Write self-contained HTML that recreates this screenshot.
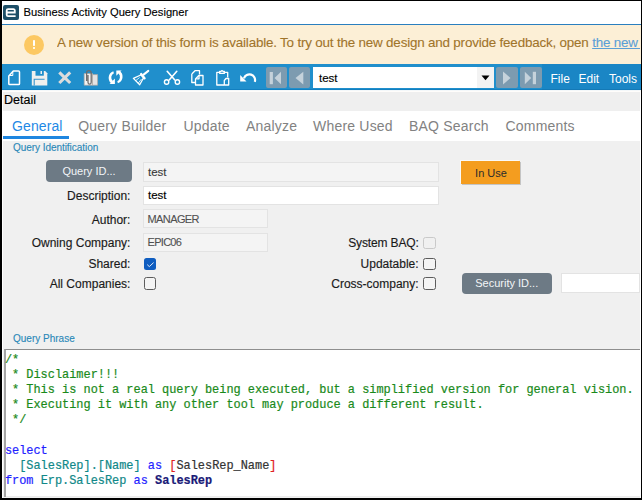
<!DOCTYPE html>
<html><head><meta charset="utf-8">
<style>
*{margin:0;padding:0;box-sizing:border-box}
html,body{width:642px;height:500px;overflow:hidden;background:#000}
body{position:relative;font-family:"Liberation Sans",sans-serif}
.a{position:absolute}
.t{position:absolute;white-space:nowrap;line-height:1}
#win{position:absolute;left:2px;top:1px;width:639px;height:497px;background:#f0f0f0;overflow:hidden}
</style></head><body>
<div id="win"></div>
<!-- title bar -->
<div class="a" style="left:2px;top:1px;width:639px;height:23px;background:#fff"></div>
<div class="a" style="left:3px;top:5px;width:16px;height:15px;background:#1d4f68;border-radius:2px"></div>
<svg class="a" style="left:3px;top:5px" width="16" height="15" viewBox="0 0 16 15">
<path d="M3.7 7.5 H11.8 V5.6 Q11.8 4.2 10.4 4.2 H5.1 Q3.7 4.2 3.7 5.6 V9.7 Q3.7 11.1 5.1 11.1 H12.6" fill="none" stroke="#fff" stroke-width="1.8"/>
</svg>
<div class="t" style="left:23.5px;top:7.1px;font-size:11.2px;color:#000;-webkit-text-stroke:0.12px">Business Activity Query Designer</div>
<div class="a" style="left:2px;top:24px;width:639px;height:1px;background:#2a7fbf"></div>
<!-- notification -->
<div class="a" style="left:2px;top:25px;width:639px;height:39px;background:#fcefd6"></div>
<div class="a" style="left:24px;top:34.5px;width:20px;height:20px;border-radius:50%;background:#fcc862"></div>
<div class="a" style="left:33.2px;top:39.6px;width:1.6px;height:6.2px;background:#fff;border-radius:0.8px"></div>
<div class="a" style="left:33.2px;top:47.4px;width:1.6px;height:1.8px;background:#fff;border-radius:0.8px"></div>
<div class="t" style="left:57px;width:583px;overflow:hidden;top:36.3px;font-size:13.4px;letter-spacing:-0.18px;color:#a0742a;-webkit-text-stroke:0.1px">A new version of this form is available. To try out the new design and provide feedback, open <span style="color:#5b9fd6;text-decoration:underline">the new design</span></div>
<!-- toolbar -->
<div class="a" style="left:2px;top:64px;width:639px;height:25px;background:#208fcc"></div>
<div class="a" style="left:2px;top:89px;width:639px;height:1px;background:#127fc0"></div>
<div class="a" style="left:542px;top:64px;width:99px;height:25px;background:#1a86c5"></div>
<div class="a" style="left:542px;top:88.5px;width:99px;height:1.5px;background:#1479b6"></div>
<div class="a" style="left:2px;top:90px;width:639px;height:1px;background:#f4f8fa"></div>
<div class="a" style="left:2px;top:91px;width:639px;height:1px;background:#fffdfb"></div>
<svg class="a" style="left:0;top:64px" width="262" height="25" viewBox="0 64 262 25">
<g fill="none" stroke="#fff" stroke-linejoin="round" stroke-linecap="round">
<!-- new -->
<path d="M8.8 76 L13.3 71 H18.5 Q19.5 71 19.5 72 V83.7 Q19.5 84.6 18.6 84.6 H9.7 Q8.8 84.6 8.8 83.7 Z" stroke-width="1.5"/>
<path d="M9.5 75.5 L12.8 75.5 L12.8 71.8" stroke-width="1"/>
</g>
<!-- save -->
<path d="M31.8 71 H45.2 L47.3 73.2 V85.4 H31.8 Z" fill="#f0f0ee"/>
<rect x="35.5" y="71" width="8.3" height="4.7" fill="#208fcc"/>
<rect x="40.5" y="71" width="1.5" height="3" fill="#f0f0ee"/>
<path d="M34.2 85.4 V79.2 H44.6" fill="none" stroke="#3592cc" stroke-width="1.1"/>
<!-- X -->
<path d="M59.3 72.3 L70.2 83 M70.2 72.3 L59.3 83" stroke="#dcdcdc" stroke-width="3.1" stroke-linecap="butt"/>
<!-- attach -->
<path d="M84.2 73.6 H92.5 V85.2 H84.2 Z" fill="#f2f2f2" stroke="#b0a8a0" stroke-width="0.7"/>
<path d="M92.5 74.6 H97.6 V85.2 H92.5 Z" fill="#e4e4e4" stroke="#b0a8a0" stroke-width="0.7"/>
<path d="M86.6 81 V73 Q86.6 70.6 88.9 70.6 Q91.2 70.6 91.2 73 V82.3 Q91.2 84.2 89.6 84.2 Q88 84.2 88 82.3 V75" fill="none" stroke="#6e6e6e" stroke-width="1.3"/>
<!-- refresh -->
<g fill="#fff">
<path d="M113.3 71.2 A6.9 6.9 0 0 0 112.3 83.8 L112.8 80.8 A4.6 4.6 0 0 1 113.9 73.2 Z"/>
<path d="M109.6 84 L114.9 84 L114.9 78.6 Z"/>
<g transform="rotate(180 115.6 77.2)">
<path d="M113.3 71.2 A6.9 6.9 0 0 0 112.3 83.8 L112.8 80.8 A4.6 4.6 0 0 1 113.9 73.2 Z"/>
<path d="M109.6 84 L114.9 84 L114.9 78.6 Z"/>
</g>
</g>
<!-- broom -->
<path d="M148.3 70.9 L143.6 74.6" stroke="#fff" stroke-width="2" stroke-linecap="round"/>
<path d="M141.2 74.2 L144.4 78.2" stroke="#fff" stroke-width="2.6" stroke-linecap="round"/>
<path d="M140.8 75 L133.4 78.4 L139.7 84.8 L143.6 77.8" fill="none" stroke="#fff" stroke-width="1.3" stroke-linejoin="round"/>
<path d="M139.6 77.5 L135.8 80.6 M141.5 79 L138.2 83.2" stroke="#fff" stroke-width="0.8"/>
<!-- scissors -->
<g fill="none" stroke="#fff">
<path d="M167.2 71.3 L174.6 79.8 M176.8 71.3 L169.4 79.8" stroke-width="1.6" stroke-linecap="round"/>
<circle cx="166.6" cy="82" r="2.2" stroke-width="1.4"/>
<circle cx="177.4" cy="82" r="2.2" stroke-width="1.4"/>
</g>
<!-- copy -->
<g fill="none" stroke="#fff" stroke-width="1.3" stroke-linejoin="round">
<path d="M191.8 74 L195 70.7 H199.5 V74.5 M195.5 82.5 H191.8 V74"/>
<path d="M195.5 79 L198.8 75.5 H203 V85 H195.5 Z"/>
<path d="M196.2 78.8 H199 V76"/>
</g>
<!-- paste -->
<g fill="none" stroke="#fff" stroke-width="1.3" stroke-linejoin="round">
<path d="M224 85 H216.8 V72.3 H219.5 M224.5 72.3 H227.7 V77.5"/>
<path d="M219.6 73.3 H224.4 V71.5 H223 Q222 69.8 221 71.5 H219.6 Z"/>
<path d="M224.3 85 V80.5 L226 78.5 H228.7 V85 Z"/>
</g>
<!-- undo -->
<path d="M244 78.3 A5.6 5.6 0 0 1 254.8 81.8" fill="none" stroke="#fff" stroke-width="2.2"/>
<path d="M240.2 75 L240.2 81.5 L246.5 81.5 Z" fill="#fff"/>
</svg>
<!-- nav buttons -->
<div class="a" style="left:265.5px;top:67px;width:21px;height:21px;background:#7d9bb0;border-radius:2px"></div>
<div class="a" style="left:289px;top:67px;width:21px;height:21px;background:#7d9bb0;border-radius:2px"></div>
<div class="a" style="left:496px;top:67px;width:22px;height:21px;background:#7d9bb0;border-radius:2px"></div>
<div class="a" style="left:519.5px;top:67px;width:22px;height:21px;background:#7d9bb0;border-radius:2px"></div>
<svg class="a" style="left:265px;top:67px" width="278" height="21" viewBox="0 0 278 21">
<g fill="#c5d2db">
<rect x="4.7" y="5" width="3.2" height="12.2"/>
<path d="M9.5 11 L16 4.8 V17.2 Z"/>
<path d="M30.5 11 L38.3 4.8 V17.5 Z"/>
<path d="M238 4.5 L245.5 11 L238 17.5 Z"/>
<path d="M259.8 4.8 L266.2 11 L259.8 17.2 Z"/><rect x="267.8" y="4.8" width="3.2" height="12.4"/>
</g>
</svg>
<!-- combo -->
<div class="a" style="left:313px;top:67px;width:181px;height:21px;background:#fff"></div>
<div class="a" style="left:477px;top:67px;width:17px;height:21px;background:#f3f3f3"></div>
<svg class="a" style="left:481px;top:75px" width="9" height="6"><path d="M0.5 0.5 H8.5 L4.5 5.2 Z" fill="#000"/></svg>
<div class="t" style="left:319px;top:72.5px;font-size:11.5px;color:#000;-webkit-text-stroke:0.15px">test</div>
<!-- menu -->
<div class="t" style="left:550.5px;top:72.5px;font-size:12px;color:#fff">File</div>
<div class="t" style="left:578.5px;top:72.5px;font-size:12px;color:#fff">Edit</div>
<div class="t" style="left:609px;top:72.5px;font-size:12px;color:#fff">Tools</div>
<!-- detail bar -->
<div class="a" style="left:2px;top:92px;width:639px;height:19px;background:#efefef"></div>
<div class="t" style="left:4px;top:94.4px;font-size:12.5px;color:#000;-webkit-text-stroke:0.15px">Detail</div>
<!-- tabs -->
<div class="a" style="left:2px;top:111px;width:639px;height:30px;background:#fff"></div>
<div class="a" style="left:3px;top:136px;width:65.5px;height:3px;background:#1e86e0"></div>
<div class="t" style="left:12px;top:118.9px;font-size:14px;letter-spacing:0.1px;color:#1e88e5">General</div>
<div class="t" style="left:78.2px;top:119.2px;font-size:14px;letter-spacing:0.2px;color:#828282">Query Builder</div>
<div class="t" style="left:183.5px;top:119.2px;font-size:14px;letter-spacing:0.2px;color:#828282">Update</div>
<div class="t" style="left:246px;top:119.2px;font-size:14px;letter-spacing:0.2px;color:#828282">Analyze</div>
<div class="t" style="left:313px;top:119.2px;font-size:14px;letter-spacing:0.2px;color:#828282">Where Used</div>
<div class="t" style="left:409px;top:119.2px;font-size:14px;letter-spacing:0.2px;color:#828282">BAQ Search</div>
<div class="t" style="left:505.5px;top:119.2px;font-size:14px;letter-spacing:0.2px;color:#828282">Comments</div>
<!-- group label -->
<div class="t" style="left:13px;top:142.7px;font-size:10px;letter-spacing:-0.05px;color:#2a88b8;-webkit-text-stroke:0.12px">Query Identification</div>
<!-- Query ID btn -->
<div class="a" style="left:46px;top:160px;width:86px;height:22px;background:#6d7a85;border-radius:4px"></div>
<div class="t" style="left:46px;width:86px;text-align:center;top:166.3px;font-size:11px;color:#f2f5f7">Query ID...</div>
<!-- fields -->
<div class="a" style="left:143px;top:162px;width:296px;height:19.5px;background:#f4f4f4;border:1px solid #e3e3e3"></div>
<div class="t" style="left:148px;top:167.3px;font-size:11.5px;color:#3a3a3a;-webkit-text-stroke:0.12px">test</div>
<div class="a" style="left:143px;top:186px;width:296px;height:18.5px;background:#fff;border:1px solid #e3e3e3"></div>
<div class="t" style="left:148px;top:190.3px;font-size:11.5px;color:#000;-webkit-text-stroke:0.15px">test</div>
<div class="a" style="left:143px;top:209px;width:125px;height:19px;background:#f4f4f4;border:1px solid #e3e3e3"></div>
<div class="t" style="left:147.5px;top:213.6px;font-size:11px;letter-spacing:-0.6px;color:#505050;-webkit-text-stroke:0.1px">MANAGER</div>
<div class="a" style="left:143px;top:233px;width:125px;height:18.5px;background:#f4f4f4;border:1px solid #e3e3e3"></div>
<div class="t" style="left:147.5px;top:237.2px;font-size:11px;letter-spacing:-0.7px;color:#505050;-webkit-text-stroke:0.1px">EPIC06</div>
<!-- labels -->
<div class="t" style="right:511.6px;top:190px;font-size:12px;color:#1a1a1a;-webkit-text-stroke:0.15px">Description:</div>
<div class="t" style="right:511.6px;top:213.5px;font-size:12px;color:#1a1a1a;-webkit-text-stroke:0.15px">Author:</div>
<div class="t" style="right:511.6px;top:236.8px;font-size:12px;color:#1a1a1a;-webkit-text-stroke:0.15px">Owning Company:</div>
<div class="t" style="right:511.6px;top:257.8px;font-size:12px;color:#1a1a1a;-webkit-text-stroke:0.15px">Shared:</div>
<div class="t" style="right:511.6px;top:278px;font-size:12px;color:#1a1a1a;-webkit-text-stroke:0.15px">All Companies:</div>
<div class="t" style="right:223.4px;top:237px;font-size:12px;letter-spacing:-0.15px;color:#1a1a1a;-webkit-text-stroke:0.15px">System BAQ:</div>
<div class="t" style="right:223.4px;top:257.5px;font-size:12px;color:#1a1a1a;-webkit-text-stroke:0.15px">Updatable:</div>
<div class="t" style="right:223.4px;top:277.5px;font-size:12px;color:#1a1a1a;-webkit-text-stroke:0.15px">Cross-company:</div>
<!-- checkboxes -->
<div class="a" style="left:143.8px;top:257.6px;width:12.6px;height:12.5px;background:#0f5dc0;border-radius:2.5px"></div>
<svg class="a" style="left:143.8px;top:257.6px" width="13" height="13"><path d="M3.2 6.6 L5.3 8.6 L9.6 4.6" fill="none" stroke="#dce8f8" stroke-width="1"/></svg>
<div class="a" style="left:143.8px;top:277.1px;width:12.6px;height:12.5px;background:#f4f4f4;border:1.3px solid #5c5c5c;border-radius:2.5px"></div>
<div class="a" style="left:423.2px;top:237.1px;width:12.6px;height:12.3px;background:#f0f0f0;border:1.2px solid #c9c9c9;border-radius:2.5px"></div>
<div class="a" style="left:423.2px;top:257.8px;width:12.6px;height:12.5px;background:#f4f4f4;border:1.3px solid #5c5c5c;border-radius:2.5px"></div>
<div class="a" style="left:423.2px;top:277.4px;width:12.6px;height:12.5px;background:#f4f4f4;border:1.3px solid #5c5c5c;border-radius:2.5px"></div>
<!-- In Use -->
<div class="a" style="left:461.2px;top:161.2px;width:59.2px;height:22.8px;background:#f49d1f;box-shadow:1px 1px 0 #c4c4c4,-1px -1px 0 #fafafa"></div>
<div class="t" style="left:461.5px;width:59px;text-align:center;top:167.5px;font-size:11px;color:#2c2c2c">In Use</div>
<!-- Security -->
<div class="a" style="left:461.5px;top:272.5px;width:90.5px;height:21px;background:#6d7a85;border-radius:4px"></div>
<div class="t" style="left:461.5px;width:90.5px;text-align:center;top:278.3px;font-size:11px;color:#f2f5f7">Security ID...</div>
<div class="a" style="left:561px;top:273.3px;width:79px;height:19.5px;background:#fff;border:1px solid #e3e3e3"></div>
<!-- Query Phrase -->
<div class="t" style="left:13px;top:333.7px;font-size:10px;color:#2a88b8;-webkit-text-stroke:0.12px">Query Phrase</div>
<!-- editor -->
<div class="a" style="left:4px;top:348.8px;width:637px;height:148px;background:#fff;border-top:1.5px solid #8e8e8e;border-left:2px solid #a5a5a5"></div>
<div class="a" style="left:6px;top:496px;width:635px;height:1px;background:#ececec"></div>
<pre id="code" class="a" style="left:4.9px;top:353.1px;font-family:'Liberation Mono',monospace;font-size:11.92px;line-height:15.08px;color:#1a8a1a;-webkit-text-stroke:0.2px">/*
 * Disclaimer!!!
 * This is not a real query being executed, but a simplified version for general vision.
 * Executing it with any other tool may produce a different result.
 */

<span style="color:#1f1fff">select</span>
  <span style="color:#108888">[SalesRep].[Name]</span> <span style="color:#1f1fff">as</span> <span style="color:#e02020">[</span><span style="color:#333">SalesRep_Name</span><span style="color:#e02020">]</span>
<span style="color:#1f1fff">from</span> <span style="color:#108888">Erp.SalesRep</span> <span style="color:#1f1fff">as</span> <b style="color:#1a1a78">SalesRep</b></pre>
<div class="a" style="left:2px;top:92px;width:1px;height:406px;background:#fff"></div>
<div class="a" style="left:640px;top:92px;width:1px;height:406px;background:#fff"></div>
</body></html>
